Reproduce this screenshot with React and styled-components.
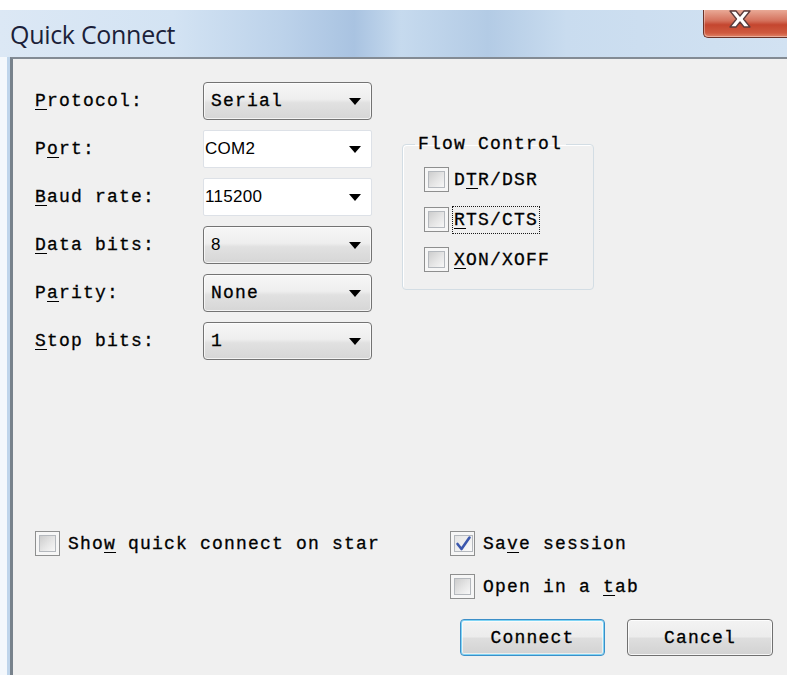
import React from 'react';
import styled, { createGlobalStyle } from 'styled-components';

const mono = `"Liberation Mono", "Courier New", monospace`;
const sans = `"Liberation Sans", Arial, sans-serif`;

const GlobalStyle = createGlobalStyle`
  html, body {
    margin: 0;
    padding: 0;
    background: #ffffff;
  }
  body {
    font-family: ${mono};
    color: #000;
  }
`;

const Frame = styled.div`
  margin-top: 10px;
  min-height: 665px;
  box-sizing: border-box;
  display: flex;
  flex-direction: column;
  padding-left: 10px;
  background: linear-gradient(90deg, #f4f8fc 0 7px, #bfd5eb 7px 10px);
`;

const TitleBar = styled.div`
  height: 47px;
  margin-left: -10px;
  padding-left: 10px;
  display: flex;
  align-items: center;
  background: linear-gradient(
    90deg,
    #dce8f5 0%,
    #d3e3f3 22%,
    #bcd2ea 36%,
    #a9c3e1 45%,
    #c6daee 51%,
    #b3cbe5 62%,
    #c9dcef 72%,
    #d2e2f2 100%
  );
`;

const Title = styled.span`
  font-family: "Open Sans", "Noto Sans", sans-serif;
  font-size: 25px;
  color: #1b1f3a;
  letter-spacing: -0.3px;
`;

const CloseButton = styled.div`
  align-self: flex-start;
  margin-left: auto;
  width: 84px;
  height: 28px;
  box-sizing: border-box;
  display: flex;
  justify-content: center;
  padding-right: 12px;
  border: 1px solid #6b3329;
  border-top: none;
  border-right: none;
  border-bottom-left-radius: 5px;
  background: linear-gradient(180deg, #e9a996 0%, #d4715c 40%, #c4462f 55%, #cf5a3f 85%, #e08468 100%);
  box-shadow: inset 1px -1px 0 rgba(255, 255, 255, 0.35);
`;

const Body = styled.div`
  flex: 1;
  display: flex;
  flex-direction: column;
  background: #f0f0f0;
  border-top: 2px solid #838b94;
  border-left: 3px solid #78828c;
  padding: 23px 0 19px 22px;
`;

const Top = styled.div`
  display: flex;
  align-items: flex-start;
`;

const Form = styled.div`
  display: grid;
  grid-template-columns: 168px 169px;
  grid-auto-rows: 38px;
  row-gap: 10px;
  align-items: center;
`;

const Label = styled.span`
  font-family: ${mono};
  font-size: 18px;
  letter-spacing: 1.2px;
  -webkit-text-stroke: 0.3px #000;
  white-space: nowrap;
`;

const Key = styled.u`
  text-underline-offset: 3px;
  text-decoration-thickness: 1px;
`;

const Combo = styled.div`
  height: 100%;
  box-sizing: border-box;
  display: flex;
  align-items: center;
  padding: ${(p) => (p.$edit ? '0 10px 0 1px' : '0 10px 0 7px')};
  border-radius: ${(p) => (p.$edit ? '2px' : '4px')};
  border: 1px solid ${(p) => (p.$edit ? '#dde1e7' : '#737373')};
  background: ${(p) =>
    p.$edit
      ? '#ffffff'
      : 'linear-gradient(180deg, #f6f6f6 0%, #eeeeee 45%, #e1e1e1 55%, #d6d6d6 100%)'};
  box-shadow: ${(p) => (p.$edit ? 'none' : 'inset 0 0 0 1px rgba(255,255,255,0.7)')};
`;

const Value = styled.span`
  flex: 1;
  font-family: ${(p) => (p.$sans ? sans : mono)};
  font-size: ${(p) => (p.$sans ? '17px' : '18px')};
  letter-spacing: ${(p) => (p.$sans ? '0.3px' : '1.2px')};
  -webkit-text-stroke: ${(p) => (p.$sans ? '0' : '0.3px #000')};
`;

const Arrow = styled.span`
  width: 0;
  height: 0;
  border-left: 6px solid transparent;
  border-right: 6px solid transparent;
  border-top: 7px solid #000;
`;

const Group = styled.fieldset`
  margin: 52px 0 0 30px;
  width: 192px;
  box-sizing: border-box;
  padding: 13px 0 17px 21px;
  border: 1px solid #d3dde4;
  border-radius: 4px;
  box-shadow: inset 1px 1px 0 #ffffff;
  display: flex;
  flex-direction: column;
  gap: 15px;
`;

const Legend = styled.legend`
  margin-left: -9px;
  padding: 0 4px 0 3px;
  line-height: 20px;
  font-family: ${mono};
  font-size: 18px;
  letter-spacing: 1.2px;
  -webkit-text-stroke: 0.3px #000;
`;

const CheckRow = styled.label`
  display: flex;
  align-items: center;
  height: 25px;
`;

const CheckBox = styled.span`
  flex: none;
  width: 25px;
  height: 25px;
  box-sizing: border-box;
  border: 1px solid #8e8f8f;
  background: #f6f6f6;
  padding: 3px;
  display: flex;
`;

const CheckInner = styled.span`
  flex: 1;
  display: flex;
  align-items: center;
  justify-content: center;
  border: 1px solid #b4b8bd;
  background: ${(p) =>
    p.$checked
      ? 'linear-gradient(135deg, #e4e4e4, #fafafa)'
      : 'linear-gradient(135deg, #cdcdcd 0%, #e6e6e6 55%, #f7f7f7 100%)'};
`;

const Caption = styled.span`
  margin-left: ${(p) => (p.$tight ? '3px' : '6px')};
  padding: 3px 1px;
  border: 1px dotted ${(p) => (p.$focused ? '#1a1a1a' : 'transparent')};
  font-family: ${mono};
  font-size: 18px;
  letter-spacing: 1.2px;
  -webkit-text-stroke: 0.3px #000;
  white-space: nowrap;
`;

const Bottom = styled.div`
  margin-top: auto;
  display: flex;
  align-items: flex-start;
`;

const LeftColumn = styled.div`
  width: 415px;
`;

const RightColumn = styled.div`
  display: flex;
  flex-direction: column;
`;

const Options = styled.div`
  display: flex;
  flex-direction: column;
  gap: 18px;
`;

const Buttons = styled.div`
  display: flex;
  gap: 22px;
  margin: 20px 0 0 10px;
`;

const Button = styled.button`
  width: ${(p) => (p.$default ? '145px' : '146px')};
  height: 37px;
  padding: 0;
  font-family: ${mono};
  font-size: 18px;
  letter-spacing: 1.2px;
  -webkit-text-stroke: 0.3px #000;
  color: #000;
  border-radius: 4px;
  border: 1px solid ${(p) => (p.$default ? '#3c8fc8' : '#707070')};
  background: linear-gradient(180deg, #f3f3f3 0%, #ececec 48%, #dedede 52%, #d2d2d2 100%);
  box-shadow: ${(p) =>
    p.$default
      ? 'inset 0 0 0 1px #7fd4f5, inset 0 0 0 2px rgba(255,255,255,0.6)'
      : 'inset 0 0 0 1px rgba(255,255,255,0.8)'};
`;

const CloseGlyph = () => (
  <svg width="26" height="18" viewBox="0 0 26 18">
    <path
      d="M3 1 H9 L13 6 L17 1 H23 L16.5 9 L23 17 H17 L13 12 L9 17 H3 L9.5 9 Z"
      fill="#ffffff"
      stroke="#5b3b3b"
      strokeWidth="1.3"
      strokeLinejoin="round"
    />
  </svg>
);

const Tick = () => (
  <svg width="17" height="17" viewBox="0 0 17 17">
    <path
      d="M2.5 9 L6.5 14 L14.5 2.5"
      fill="none"
      stroke="#3b57ad"
      strokeWidth="2.6"
      strokeLinecap="round"
      strokeLinejoin="round"
    />
  </svg>
);

const Check = ({ checked, focused, tight, children }) => (
  <CheckRow>
    <CheckBox>
      <CheckInner $checked={checked}>{checked && <Tick />}</CheckInner>
    </CheckBox>
    <Caption $focused={focused} $tight={tight}>
      {children}
    </Caption>
  </CheckRow>
);

const fields = [
  { label: ['', 'P', 'rotocol:'], value: 'Serial' },
  { label: ['P', 'o', 'rt:'], value: 'COM2', edit: true },
  { label: ['', 'B', 'aud rate:'], value: '115200', edit: true },
  { label: ['', 'D', 'ata bits:'], value: '8', sans: true },
  { label: ['P', 'a', 'rity:'], value: 'None' },
  { label: ['', 'S', 'top bits:'], value: '1' },
];

export default function App() {
  return (
    <>
      <GlobalStyle />
      <Frame>
        <TitleBar>
          <Title>Quick Connect</Title>
          <CloseButton>
            <CloseGlyph />
          </CloseButton>
        </TitleBar>
        <Body>
          <Top>
            <Form>
              {fields.map((f) => (
                <React.Fragment key={f.label.join('')}>
                  <Label>
                    {f.label[0]}
                    <Key>{f.label[1]}</Key>
                    {f.label[2]}
                  </Label>
                  <Combo $edit={f.edit}>
                    <Value $sans={f.edit || f.sans}>{f.value}</Value>
                    <Arrow />
                  </Combo>
                </React.Fragment>
              ))}
            </Form>
            <Group>
              <Legend>Flow Control</Legend>
              <Check tight>
                D<Key>T</Key>R/DSR
              </Check>
              <Check tight focused>
                <Key>R</Key>TS/CTS
              </Check>
              <Check tight>
                <Key>X</Key>ON/XOFF
              </Check>
            </Group>
          </Top>
          <Bottom>
            <LeftColumn>
              <Check>
                Sho<Key>w</Key> quick connect on star
              </Check>
            </LeftColumn>
            <RightColumn>
              <Options>
                <Check checked>
                  Sa<Key>v</Key>e session
                </Check>
                <Check>
                  Open in a <Key>t</Key>ab
                </Check>
              </Options>
              <Buttons>
                <Button $default>Connect</Button>
                <Button>Cancel</Button>
              </Buttons>
            </RightColumn>
          </Bottom>
        </Body>
      </Frame>
    </>
  );
}
